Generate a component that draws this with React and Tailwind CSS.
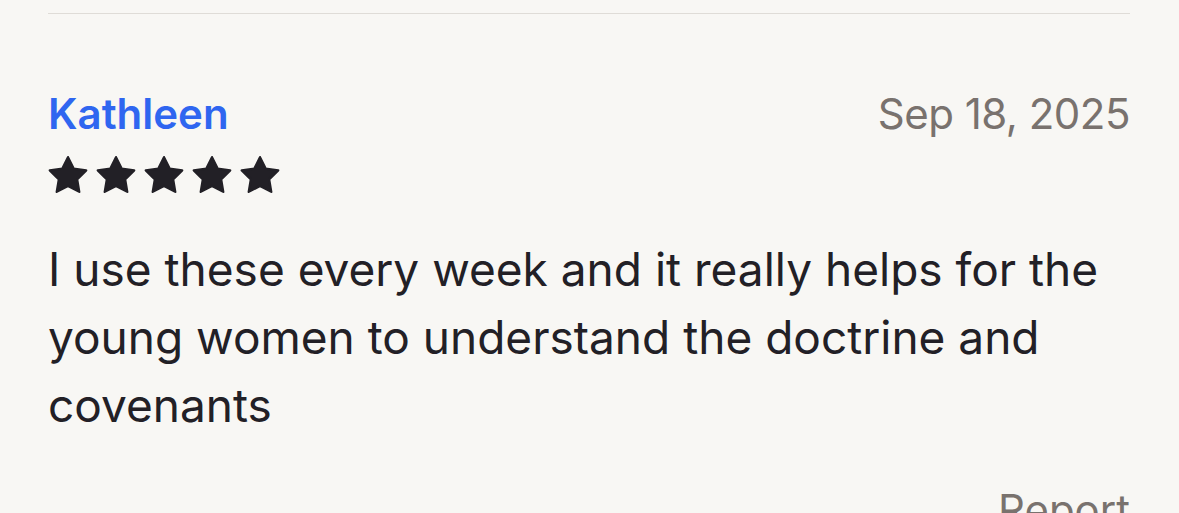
const Star = () => (
    <svg width="40" height="40" viewBox="0 0 24 24" className="shrink-0">
        <path
            d="M12 1.3L15.38 8.15 22.94 9.25 17.47 14.58 18.76 22.1 12 18.55 5.24 22.1 6.53 14.58 1.06 9.25 8.62 8.15z"
            fill="#222026"
            stroke="#222026"
            strokeWidth="1.4"
            strokeLinejoin="round"
        />
    </svg>
);

export default function App() {
    return (
        <div className="h-[513px] overflow-hidden bg-[#f8f7f4] pl-[48px] pr-[49px] font-['Inter','Liberation_Sans',sans-serif]">
            {/* divider */}
            <div className="mt-[13px] h-px bg-[#dfdcd7]" />

            {/* header */}
            <div className="mt-[75px] flex items-baseline justify-between leading-[50px]">
                <span className="text-[42px] font-semibold text-[#2f66f0]">Kathleen</span>
                <span className="text-[42px] tracking-[-0.5px] text-[#79726e]">Sep 18, 2025</span>
            </div>

            {/* rating */}
            <div className="mt-[16px] flex gap-[8px]">
                <Star />
                <Star />
                <Star />
                <Star />
                <Star />
            </div>

            {/* review */}
            <p className="mt-[40px] text-[46px] leading-[68px] text-[#222026]">
                I use these every week and it really helps for the young women to understand the doctrine and
                covenants
            </p>

            <div className="mt-[46px] flex justify-end leading-[50px]">
                <span className="text-[42px] text-[#79726e]">Report</span>
            </div>
        </div>
    );
}
